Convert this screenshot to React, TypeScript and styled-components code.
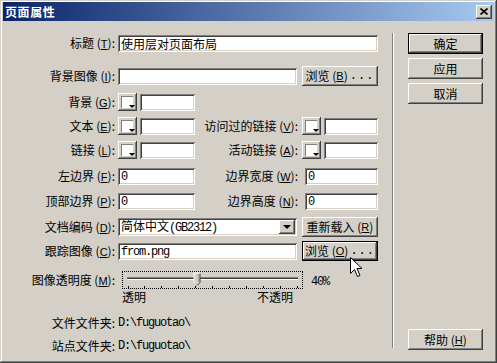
import React from "react";
import styled, { createGlobalStyle } from "styled-components";

const cjk = `"Noto Sans CJK SC", "Noto Sans", sans-serif`;
const mono = `"Liberation Mono", "DejaVu Sans Mono", monospace`;

const GlobalStyle = createGlobalStyle`
  html, body { margin: 0; padding: 0; background: #d4d0c8; }
  body { font-family: ${cjk}; font-size: 12px; }
  * { box-sizing: border-box; }
`;

const raised = `box-shadow: inset -1px -1px #404040, inset 1px 1px #ffffff, inset -2px -2px #808080, inset 2px 2px #d4d0c8;`;
const sunken = `box-shadow: inset 1px 1px #808080, inset -1px -1px #ffffff, inset 2px 2px #404040, inset -2px -2px #d4d0c8;`;

const Window = styled.div`
  position: relative;
  width: 497px;
  height: 363px;
  background: #d4d0c8;
  padding: 2px 3px 3px 3px;
  display: flex;
  flex-direction: column;
  box-shadow: inset -1px -1px #404040, inset 1px 1px #d4d0c8, inset -2px -2px #808080, inset 2px 2px #ffffff;
  font-family: ${cjk};
  font-size: 12px;
  color: #000;
`;

const TitleBar = styled.div`
  height: 19px;
  display: flex;
  align-items: center;
  justify-content: space-between;
  padding: 0 2px 0 2px;
  background: linear-gradient(to right, #0a246a, #a6caf0);
`;

const Title = styled.span`
  color: #fff;
  font-weight: bold;
  font-size: 12px;
  line-height: 14px;
  letter-spacing: 0.6px;
`;

const CloseBtn = styled.div`
  width: 16px;
  height: 14px;
  background: #d4d0c8;
  display: flex;
  align-items: center;
  justify-content: center;
  ${raised}
`;

const Body = styled.div`
  flex: 1;
  display: flex;
`;

const FormPanel = styled.div`
  width: 389px;
  padding-top: 12px;
  display: flex;
  flex-direction: column;
`;

const Separator = styled.div`
  width: 2px;
  height: 315px;
  margin-top: 12px;
  border-left: 1px solid #808080;
  border-right: 1px solid #ffffff;
`;

const ButtonColumn = styled.div`
  display: flex;
  flex-direction: column;
  gap: 4px;
  padding: 12px 0 10px 14px;
`;

const Row = styled.div<{ $h?: number; $mt?: number }>`
  display: grid;
  grid-template-columns: 112px auto;
  column-gap: 3px;
  align-items: center;
  height: ${(p) => p.$h ?? 20}px;
  margin-top: ${(p) => p.$mt ?? 0}px;
`;

const Label = styled.span<{ $pr?: number }>`
  text-align: right;
  white-space: nowrap;
  line-height: 14px;
  padding-right: ${(p) => p.$pr ?? 0}px;
`;

const Key = styled.span`
  font-family: "Liberation Sans", sans-serif;
  font-size: 11px;
  text-decoration: underline;
`;

const Pair = styled.div<{ $gap?: number }>`
  display: flex;
  align-items: center;
  gap: ${(p) => p.$gap ?? 3}px;
`;

const Split = styled.div`
  display: grid;
  grid-template-columns: 77px 107px 76px;
  align-items: center;
`;

const RightCell = styled.div`
  justify-self: end;
  display: flex;
  align-items: center;
  gap: 3px;
`;

const Field = styled.input<{ $w: number; $mono?: boolean }>`
  width: ${(p) => p.$w}px;
  height: 17px;
  border: none;
  outline: none;
  margin: 0;
  background: #fff;
  ${sunken}
  padding: 1px 3px 0 3px;
  font-family: ${(p) => (p.$mono ? mono : cjk)};
  font-size: 12px;
  letter-spacing: ${(p) => (p.$mono ? "-1.2px" : "0")};
  color: #000;
  line-height: 14px;
`;

const Button = styled.button<{ $default?: boolean; $w?: number; $h?: number }>`
  width: ${(p) => p.$w ?? 75}px;
  height: ${(p) => p.$h ?? 21}px;
  margin: 0;
  padding: 0;
  background: #d4d0c8;
  border: ${(p) => (p.$default ? "1px solid #000" : "none")};
  ${raised}
  font-family: ${cjk};
  font-size: 12px;
  line-height: 14px;
  color: #000;
  white-space: nowrap;
  display: flex;
  align-items: center;
  justify-content: center;
`;

const Dots = styled.span`
  font-family: ${mono};
  letter-spacing: 1px;
  margin-left: 2px;
`;

const Swatch = styled.div`
  position: relative;
  width: 19px;
  height: 18px;
  background: #d4d0c8;
  ${raised}
  &::before {
    content: "";
    position: absolute;
    left: 3px;
    top: 3px;
    width: 11px;
    height: 11px;
    border-left: 1px solid #808080;
    border-top: 1px solid #808080;
    background: #fff;
  }
  &::after {
    content: "";
    position: absolute;
    right: 2px;
    bottom: 3px;
    border-left: 3px solid transparent;
    border-right: 3px solid transparent;
    border-top: 3px solid #000;
  }
`;

const Select = styled.div`
  width: 179px;
  height: 18px;
  background: #fff;
  ${sunken}
  display: flex;
  align-items: center;
  padding: 0 2px 0 3px;
`;

const SelectText = styled.span`
  flex: 1;
  line-height: 14px;
  white-space: nowrap;
`;

const MonoText = styled.span<{ $pt?: number }>`
  font-family: ${mono};
  font-size: 12px;
  letter-spacing: -1.2px;
  line-height: 14px;
  white-space: nowrap;
  padding-top: ${(p) => p.$pt ?? 0}px;
`;

const DropBtn = styled.div`
  width: 16px;
  height: 14px;
  background: #d4d0c8;
  ${raised}
  display: flex;
  align-items: center;
  justify-content: center;
  &::after {
    content: "";
    border-left: 4px solid transparent;
    border-right: 4px solid transparent;
    border-top: 4px solid #000;
  }
`;

const SliderBox = styled.div`
  width: 181px;
  height: 18px;
  margin-left: 4px;
  border: 1px dotted #000;
`;

const SliderRow = styled.div`
  display: flex;
  align-items: center;
  gap: 8px;
`;

const Ends = styled.div`
  width: 171px;
  margin-left: 4px;
  display: flex;
  justify-content: space-between;
  line-height: 14px;
`;

const Cursor = styled.svg`
  position: absolute;
  left: 350px;
  top: 257px;
`;

const Mn = ({ k }: { k: string }) => (
  <>
    {" "}(<Key>{k}</Key>):
  </>
);

const Slider = () => {
  const ticks = Array.from({ length: 11 }, (_, i) => 4.5 + i * 16.9);
  return (
    <SliderBox>
      <svg width="179" height="16" viewBox="0 0 179 16">
        <rect x="4" y="5" width="171" height="1" fill="#808080" />
        <rect x="4" y="6" width="171" height="1" fill="#404040" />
        <rect x="4" y="7" width="171" height="1" fill="#ffffff" />
        {ticks.map((x) => (
          <rect key={x} x={Math.round(x)} y="14" width="1" height="2" fill="#000" />
        ))}
        <polygon points="71,1 77,1 77,10 74,13 71,10" fill="#d4d0c8" stroke="none" />
        <polyline points="71,11 71,1 77,1" fill="none" stroke="#ffffff" strokeWidth="1" />
        <polyline points="77,1.5 77,10.5 74,13.5" fill="none" stroke="#404040" strokeWidth="1" />
        <polyline points="76,2 76,10" fill="none" stroke="#808080" strokeWidth="1" />
      </svg>
    </SliderBox>
  );
};

export default function App() {
  return (
    <>
      <GlobalStyle />
      <Window>
        <TitleBar>
          <Title>页面属性</Title>
          <CloseBtn>
            <svg width="8" height="7" viewBox="0 0 8 7">
              <path d="M0.5 0.5 L7.5 6.5 M7.5 0.5 L0.5 6.5" stroke="#000" strokeWidth="1.6" />
            </svg>
          </CloseBtn>
        </TitleBar>
        <Body>
          <FormPanel>
            <Row>
              <Label>标题<Mn k="T" /></Label>
              <Field $w={260} readOnly value="使用层对页面布局" />
            </Row>
            <Row $mt={13}>
              <Label>背景图像<Mn k="I" /></Label>
              <Pair $gap={5}>
                <Field $w={179} readOnly value="" />
                <Button $w={76} $h={20}>
                  浏览 (<Key>B</Key>)<Dots>...</Dots>
                </Button>
              </Pair>
            </Row>
            <Row $mt={6}>
              <Label>背景<Mn k="G" /></Label>
              <Pair>
                <Swatch />
                <Field $w={55} readOnly value="" />
              </Pair>
            </Row>
            <Row $mt={4}>
              <Label>文本<Mn k="E" /></Label>
              <Split>
                <Pair>
                  <Swatch />
                  <Field $w={55} readOnly value="" />
                </Pair>
                <Label $pr={4}>访问过的链接<Mn k="V" /></Label>
                <RightCell>
                  <Swatch />
                  <Field $w={54} readOnly value="" />
                </RightCell>
              </Split>
            </Row>
            <Row $mt={4}>
              <Label>链接<Mn k="L" /></Label>
              <Split>
                <Pair>
                  <Swatch />
                  <Field $w={55} readOnly value="" />
                </Pair>
                <Label $pr={4}>活动链接<Mn k="A" /></Label>
                <RightCell>
                  <Swatch />
                  <Field $w={54} readOnly value="" />
                </RightCell>
              </Split>
            </Row>
            <Row $mt={6}>
              <Label>左边界<Mn k="F" /></Label>
              <Split>
                <Field $w={77} $mono readOnly value="0" />
                <Label $pr={4}>边界宽度<Mn k="W" /></Label>
                <RightCell>
                  <Field $w={73} $mono readOnly value="0" />
                </RightCell>
              </Split>
            </Row>
            <Row $mt={5}>
              <Label>顶部边界<Mn k="P" /></Label>
              <Split>
                <Field $w={77} $mono readOnly value="0" />
                <Label $pr={4}>边界高度<Mn k="N" /></Label>
                <RightCell>
                  <Field $w={73} $mono readOnly value="0" />
                </RightCell>
              </Split>
            </Row>
            <Row $mt={6}>
              <Label>文档编码<Mn k="D" /></Label>
              <Pair $gap={5}>
                <Select>
                  <SelectText>
                    简体中文<MonoText>(GB2312)</MonoText>
                  </SelectText>
                  <DropBtn />
                </Select>
                <Button $w={76} $h={20}>
                  重新载入 (<Key>R</Key>)
                </Button>
              </Pair>
            </Row>
            <Row $mt={4}>
              <Label>跟踪图像<Mn k="C" /></Label>
              <Pair $gap={5}>
                <Field $w={179} $mono readOnly value="from.png" />
                <Button $w={76} $h={20} $default>
                  浏览 (<Key>O</Key>)<Dots>...</Dots>
                </Button>
              </Pair>
            </Row>
            <Row $mt={10} $h={18}>
              <Label>图像透明度<Mn k="M" /></Label>
              <SliderRow>
                <Slider />
                <MonoText $pt={4}>40%</MonoText>
              </SliderRow>
            </Row>
            <Row $h={16}>
              <span />
              <Ends>
                <span>透明</span>
                <span>不透明</span>
              </Ends>
            </Row>
            <Row $mt={8}>
              <Label>文件文件夹:</Label>
              <MonoText>{"D:\\fuguotao\\"}</MonoText>
            </Row>
            <Row $mt={3}>
              <Label>站点文件夹:</Label>
              <MonoText>{"D:\\fuguotao\\"}</MonoText>
            </Row>
          </FormPanel>
          <Separator />
          <ButtonColumn>
            <Button $default>确定</Button>
            <Button>应用</Button>
            <Button>取消</Button>
            <Button style={{ marginTop: "auto" }}>
              帮助 (<Key>H</Key>)
            </Button>
          </ButtonColumn>
        </Body>
        <Cursor width="13" height="21" viewBox="0 0 13 21">
          <path
            d="M0.5 0.5 L0.5 16.5 L4.5 12.5 L7.5 19.5 L10 18.5 L7 11.5 L12 11.5 Z"
            fill="#fff"
            stroke="#000"
            strokeWidth="1"
          />
        </Cursor>
      </Window>
    </>
  );
}
